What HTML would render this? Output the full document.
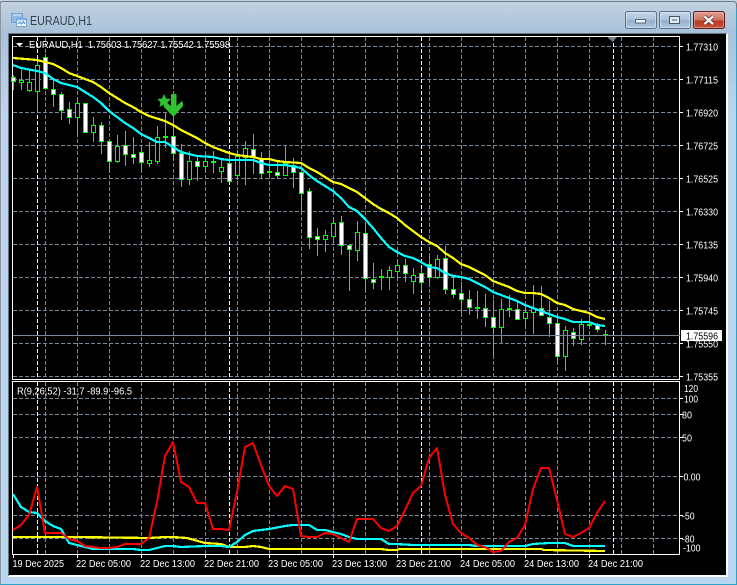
<!DOCTYPE html>
<html><head><meta charset="utf-8"><style>
html,body{margin:0;padding:0;background:#b9d5ef}
svg{display:block}
text{font-family:"Liberation Sans",sans-serif;font-size:10px;fill:#fff}
</style></head><body>
<svg width="737" height="585" viewBox="0 0 737 585" xmlns="http://www.w3.org/2000/svg">
<defs>
<linearGradient id="g" x1="0" y1="0" x2="0" y2="1"><stop offset="0" stop-color="#c3d2df"/><stop offset=".055" stop-color="#a9c2da"/><stop offset=".2" stop-color="#bdd5ec"/><stop offset="1" stop-color="#b9d5ef"/></linearGradient>
<linearGradient id="b" x1="0" y1="0" x2="0" y2="1"><stop offset="0" stop-color="#c9d8e6"/><stop offset=".5" stop-color="#aac1d8"/><stop offset=".55" stop-color="#94afca"/><stop offset="1" stop-color="#b4cde4"/></linearGradient>
<linearGradient id="c" x1="0" y1="0" x2="0" y2="1"><stop offset="0" stop-color="#dfa093"/><stop offset=".5" stop-color="#cf7460"/><stop offset=".55" stop-color="#b93a22"/><stop offset="1" stop-color="#c8553a"/></linearGradient>
</defs>
<rect width="737" height="585" fill="url(#g)"/>
<path d="M0 585V4Q0 1.5 3 1.5H733Q736 1.5 736.5 4V585" fill="none" stroke="#6f7c87" stroke-width="1"/>
<path d="M.5 4V585" stroke="#8a97a3" fill="none"/>
<rect x="0" y="584" width="737" height="1" fill="#2aa0c8"/>
<rect x="736" y="8" width="1" height="577" fill="#2aa0c8"/>

<!-- title icon -->
<rect x="11.500" y="13.500" width="11" height="9" fill="#8fbce6" stroke="#6fa3d6"/>
<rect x="16.500" y="18.500" width="10" height="8" fill="#f4f8fc" stroke="#6fa3d6"/>
<rect x="17" y="19" width="9" height="1.500" fill="#8fbce6"/>
<path d="M18 24l2-2 1.500 2 2-2.500 1.500 2.500" fill="none" stroke="#4f86c0"/>
<path d="M13 15h8" stroke="#e2eef9"/>
<text x="30" y="25" textLength="62" lengthAdjust="spacingAndGlyphs" style="font-size:12.500px;fill:#33414f">EURAUD,H1</text>

<!-- buttons -->
<rect x="625.500" y="11.500" width="31" height="17" rx="2" fill="url(#b)" stroke="#5e7389"/>
<rect x="626.500" y="12.500" width="29" height="15" rx="1.500" fill="none" stroke="#dbe6f0" stroke-opacity=".6"/>
<rect x="635.500" y="19.500" width="10" height="3.500" fill="#f2f4f6" stroke="#55677a"/>
<rect x="659.500" y="11.500" width="31" height="17" rx="2" fill="url(#b)" stroke="#5e7389"/>
<rect x="660.500" y="12.500" width="29" height="15" rx="1.500" fill="none" stroke="#dbe6f0" stroke-opacity=".6"/>
<rect x="669.500" y="16.500" width="10" height="7" fill="#e6ebf0" stroke="#44566a"/>
<rect x="672" y="19" width="5" height="2" fill="#8ea3b8"/>
<rect x="693.500" y="11.500" width="31" height="17" rx="2" fill="url(#c)" stroke="#5b1f25"/>
<rect x="694.500" y="12.500" width="29" height="15" rx="1.500" fill="none" stroke="#eec0b4" stroke-opacity=".5"/>
<path d="M704.500 16.500L713 24M713 16.500L704.500 24" stroke="#5a3a38" stroke-width="4"/>
<path d="M704.500 16.500L713 24M713 16.500L704.500 24" stroke="#f6f3f2" stroke-width="2.400"/>

<!-- chart frame -->
<rect x="8" y="33" width="720" height="544" fill="#fff"/>
<rect x="8" y="33" width="719" height="1" fill="#69747e"/>
<rect x="8" y="33" width="1" height="543" fill="#69747e"/>
<rect x="9" y="34" width="717" height="541" fill="#000"/>

<!-- grid -->
<g shape-rendering="crispEdges" fill="none" stroke="#778899" stroke-dasharray="4 2">
<path d="M13 46.500H680M13 79.500H680M13 112.500H680M13 145.500H680M13 178.500H680M13 211.500H680M13 244.500H680M13 277.500H680M13 310.500H680M13 343.500H680M13 376.500H680"/>
<path d="M13 398.500H680M13 414.500H680M13 437.500H680M13 476.500H680M13 515.500H680M13 538.500H680"/>
<path d="M45.500 37V379M77.500 37V379M109.500 37V379M141.500 37V379M173.500 37V379M205.500 37V379M237.500 37V379M269.500 37V379M301.500 37V379M333.500 37V379M365.500 37V379M397.500 37V379M429.500 37V379M461.500 37V379M493.500 37V379M525.500 37V379M557.500 37V379M589.500 37V379M621.500 37V379M653.500 37V379"/>
<path d="M45.500 382V554M77.500 382V554M109.500 382V554M141.500 382V554M173.500 382V554M205.500 382V554M237.500 382V554M269.500 382V554M301.500 382V554M333.500 382V554M365.500 382V554M397.500 382V554M429.500 382V554M461.500 382V554M493.500 382V554M525.500 382V554M557.500 382V554M589.500 382V554M621.500 382V554M653.500 382V554"/>
</g>
<g shape-rendering="crispEdges" fill="none" stroke="#fff" stroke-dasharray="4 2">
<path d="M37.500 37V379M229.500 37V379M421.500 37V379M613.500 37V379M37.500 382V554M229.500 382V554M421.500 382V554M613.500 382V554"/>
</g>

<!-- boxes and ticks -->
<g shape-rendering="crispEdges" fill="none" stroke="#fff">
<rect x="12.500" y="36.500" width="667" height="343"/>
<rect x="12.500" y="381.500" width="667" height="173"/>
<path d="M680 46.500h3M680 79.500h3M680 112.500h3M680 145.500h3M680 178.500h3M680 211.500h3M680 244.500h3M680 277.500h3M680 310.500h3M680 343.500h3M680 376.500h3"/>
<path d="M680 398.500h3M680 414.500h3M680 437.500h3M680 476.500h3M680 515.500h3M680 538.500h3"/>
<path d="M13.500 555v3M77.500 555v3M141.500 555v3M205.500 555v3M269.500 555v3M333.500 555v3M397.500 555v3M461.500 555v3M525.500 555v3M589.500 555v3"/>
</g>

<polygon points="607.500,37 617,37 612.500,42" fill="#778088"/>

<!-- candles -->
<g stroke="#00ff00" stroke-width="1">
<path fill="none" d="M13.500 75V90M21.500 70V90M29.500 70V92M37.500 62V113M45.500 54V90M53.500 80V107M61.500 92V120M69.500 102V124M77.500 98V135M85.500 103V132M93.500 117V142M101.500 122V154M109.500 141V172M117.500 135V163M125.500 131V166M133.500 137V164M141.500 145V171M149.500 142V167M157.500 126V164M165.500 113V148M173.500 117V160M181.500 144V187M189.500 151V185M197.500 155V181M205.500 153V172M213.500 151V173M221.500 158V183M229.500 152V182M237.500 150V180M245.500 141V185M253.500 134V174M261.500 152V178M269.500 150V178M277.500 160V179M285.500 146V175M293.500 158V188M301.500 172V215M309.500 188V249M317.500 228V256M325.500 230V252M333.500 217V243M341.500 216V255M349.500 245V291M357.500 221V261M365.500 222V291M373.500 263V289M381.500 269V290M389.500 266V290M397.500 260V279M405.500 259V282M413.500 268V294M421.500 268V290M429.500 256V283M437.500 255V279M445.500 246V294M453.500 277V298M461.500 282V314M469.500 290V315M477.500 291V319M485.500 294V327M493.500 300V356M501.500 299V343M509.500 295V317M517.500 302V320M525.500 305V327M533.500 285V334M541.500 286V316M549.500 301V337M557.500 315V363M565.500 326V371M573.500 328V346M581.500 319V345M589.500 314V329M597.500 323V332M605.500 330V345"/>
<path fill="#000" d="M19.500 80.500h4v2h-4zM27.500 82.500h4v8h-4zM35.500 65.500h4v26h-4zM75.500 103.500h4v14h-4zM91.500 125.500h4v7h-4zM115.500 146.500h4v15h-4zM147.500 160.500h4v3h-4zM155.500 137.500h4v24h-4zM187.500 161.500h4v18h-4zM203.500 161.500h4v5h-4zM219.500 167.500h4v4h-4zM235.500 156.500h4v19h-4zM243.500 148.500h4v9h-4zM283.500 163.500h4v12h-4zM323.500 235.500h4v4h-4zM331.500 223.500h4v13h-4zM355.500 232.500h4v18h-4zM387.500 270.500h4v7h-4zM395.500 265.500h4v6h-4zM411.500 275.500h4v6h-4zM435.500 259.500h4v18h-4zM499.500 309.500h4v18h-4zM523.500 312.500h4v6h-4zM531.500 308.500h4v4h-4zM563.500 330.500h4v26h-4zM579.500 324.500h4v15h-4z"/>
<path fill="#00ff00" d="M163.500 136.500h4v1h-4zM211.500 161.500h4v1h-4zM267.500 171.500h4v1h-4zM379.500 276.500h4v1h-4zM475.500 307.500h4v1h-4zM507.500 308.500h4v1h-4zM587.500 324.500h4v1h-4zM603.500 334.500h4v1h-4z"/>
<path fill="#fff" d="M11.500 77.500h4v4h-4zM43.500 57.500h4v31h-4zM51.500 89.500h4v5h-4zM59.500 94.500h4v16h-4zM67.500 109.500h4v8h-4zM83.500 103.500h4v29h-4zM99.500 125.500h4v16h-4zM107.500 141.500h4v20h-4zM123.500 145.500h4v9h-4zM131.500 154.500h4v3h-4zM139.500 152.500h4v10h-4zM171.500 136.500h4v17h-4zM179.500 153.500h4v26h-4zM195.500 161.500h4v5h-4zM227.500 163.500h4v18h-4zM251.500 149.500h4v8h-4zM259.500 158.500h4v15h-4zM275.500 172.500h4v3h-4zM291.500 165.500h4v7h-4zM299.500 172.500h4v21h-4zM307.500 191.500h4v46h-4zM315.500 236.500h4v3h-4zM339.500 222.500h4v23h-4zM347.500 245.500h4v4h-4zM363.500 233.500h4v45h-4zM371.500 279.500h4v3h-4zM403.500 265.500h4v8h-4zM419.500 273.500h4v9h-4zM427.500 264.500h4v13h-4zM443.500 258.500h4v31h-4zM451.500 289.500h4v5h-4zM459.500 293.500h4v6h-4zM467.500 299.500h4v8h-4zM483.500 308.500h4v9h-4zM491.500 317.500h4v10h-4zM515.500 309.500h4v10h-4zM539.500 308.500h4v7h-4zM547.500 317.500h4v6h-4zM555.500 323.500h4v33h-4zM571.500 332.500h4v6h-4zM595.500 324.500h4v5h-4z"/>
</g>

<!-- price line -->
<path d="M13 335.500H680" stroke="#778899" shape-rendering="crispEdges"/>

<!-- MAs -->
<g fill="none" stroke-width="2.200" stroke-linejoin="round" shape-rendering="crispEdges">
<polyline stroke="#ffff00" points="13,58 37,60 45,62 53,64 61,68 69,73 77,76 93,82 101,87 109,93 117,98 125,103 133,107 141,112 149,116 165,121 173,125 181,130 189,134 197,138 205,143 213,147 221,150 229,153 237,155 253,157 261,159 269,159 277,161 285,162 301,163 309,168 317,172 325,177 333,182 341,184 349,188 357,192 365,198 373,204 381,209 389,213 397,218 405,225 413,231 421,237 429,242 437,246 445,253 453,258 461,264 469,267 477,271 485,275 493,281 501,284 509,287 517,291 525,293 533,293 541,294 549,298 557,303 565,305 573,309 581,311 589,313 597,317 605,319"/>
<polyline stroke="#00ffff" points="13,65 21,68 37,71 45,73 53,79 61,83 77,87 93,97 101,103 109,111 117,117 125,123 133,128 141,134 149,138 157,142 165,142 173,147 181,152 189,154 197,156 213,157 221,159 229,160 253,160 261,163 269,165 285,165 301,168 309,175 317,181 325,186 333,191 341,198 349,207 357,211 365,219 373,228 381,238 389,247 397,252 405,256 413,258 421,262 429,267 437,268 445,273 453,276 461,277 469,279 477,283 485,287 493,292 501,295 509,298 517,301 525,305 533,308 541,311 549,314 557,317 565,319 573,322 589,322 597,325 605,326"/>
</g>

<!-- arrow & star -->
<polygon fill="#2fc22f" points="164,94 166,98.500 171,99 167.500,102.500 168.500,107 164,104.500 159.500,107 160.500,102.500 157.500,99 162,98.500"/>
<polygon fill="#2fc22f" points="171,94 176.500,94 176.500,106 182,101 183,103 183,106 173.500,117 164,107 164,104 166,102 171,106"/>

<!-- sub indicator -->
<g fill="none" stroke-width="2" stroke-linejoin="round">
<polyline stroke="#ffff00" stroke-width="2.200" shape-rendering="crispEdges" points="13,537 37,537 77,537 149,538 165,537 173,537 187,538 205,543 221,544 229,547 245,547 253,546 261,547 269,549 381,549 389,550 397,550 399,549 541,549 544,550 605,551"/>
<polyline stroke="#00ffff" stroke-width="2.200" shape-rendering="crispEdges" points="13,494 21,507 29,512 37,513 45,521 53,526 61,529 69,543 77,545 85,547 93,549 133,549 141,550 149,550 157,548 165,546 173,546 181,547 205,546 221,546 229,547 237,542 245,535 253,531 269,529 285,526 293,525 309,525 317,530 325,530 341,534 349,537 357,539 381,539 389,544 397,544 413,545 429,545 469,545 477,546 525,546 533,544 549,543 565,543 573,546 605,546"/>
<polyline stroke="#ff0000" stroke-width="2" points="13,530 21,525 29,515 37,487 45,533 53,533 61,533 69,539 77,541 85,546 93,547 101,548 109,548 117,547 125,544 133,544 141,544 149,538 157,502 165,456 173,442 181,482 189,487 197,503 205,503 213,529 221,529 229,530 237,492 245,447 253,443 261,465 269,486 277,496 285,486 293,489 301,536 309,537 317,537 325,533 333,534 341,538 349,542 357,519 365,519 373,519 381,528 389,531 397,526 405,510 413,493 421,486 429,458 437,448 445,495 453,524 461,533 469,538 477,545 485,547 493,552 501,551 509,542 517,538 525,525 533,489 541,468 549,468 557,500 565,534 573,537 581,533 589,528 597,513 605,501"/>
</g>

<!-- chart text -->
<polygon points="16,43 23,43 19.500,46.500" fill="#fff"/>
<text x="29" y="48" textLength="201" lengthAdjust="spacingAndGlyphs">EURAUD,H1&#160;&#160;1.75603 1.75627 1.75542 1.75598</text>
<text x="17" y="394.500" textLength="115" lengthAdjust="spacingAndGlyphs">R(9,26,52) -31.7 -89.9 -96.5</text>

<g>
<text x="686" y="50.500" textLength="32" lengthAdjust="spacingAndGlyphs">1.77310</text>
<text x="686" y="83.500" textLength="32" lengthAdjust="spacingAndGlyphs">1.77115</text>
<text x="686" y="116.500" textLength="32" lengthAdjust="spacingAndGlyphs">1.76920</text>
<text x="686" y="149.500" textLength="32" lengthAdjust="spacingAndGlyphs">1.76725</text>
<text x="686" y="182.500" textLength="32" lengthAdjust="spacingAndGlyphs">1.76525</text>
<text x="686" y="215.500" textLength="32" lengthAdjust="spacingAndGlyphs">1.76330</text>
<text x="686" y="248.500" textLength="32" lengthAdjust="spacingAndGlyphs">1.76135</text>
<text x="686" y="281.500" textLength="32" lengthAdjust="spacingAndGlyphs">1.75940</text>
<text x="686" y="314.500" textLength="32" lengthAdjust="spacingAndGlyphs">1.75745</text>
<text x="686" y="347.500" textLength="32" lengthAdjust="spacingAndGlyphs">1.75550</text>
<text x="686" y="380.500" textLength="32" lengthAdjust="spacingAndGlyphs">1.75355</text>
</g>
<rect x="681" y="330" width="41" height="11" fill="#fff"/>
<text x="686" y="339.500" textLength="32" lengthAdjust="spacingAndGlyphs" style="fill:#000">1.75596</text>

<text x="684" y="392" textLength="14" lengthAdjust="spacingAndGlyphs">120</text>
<text x="684" y="402.500" textLength="14" lengthAdjust="spacingAndGlyphs">100</text>
<text x="682" y="418.500" textLength="10" lengthAdjust="spacingAndGlyphs">80</text>
<text x="682" y="441.500" textLength="10" lengthAdjust="spacingAndGlyphs">50</text>
<text x="683.500" y="480.500" textLength="17" lengthAdjust="spacingAndGlyphs">0.00</text>
<text x="682" y="519.500" textLength="12.500" lengthAdjust="spacingAndGlyphs">-50</text>
<text x="682" y="542.500" textLength="12.500" lengthAdjust="spacingAndGlyphs">-80</text>
<text x="683" y="551.500" textLength="17.500" lengthAdjust="spacingAndGlyphs">-100</text>

<g>
<text x="12.500" y="567" textLength="51.500" lengthAdjust="spacingAndGlyphs">19 Dec 2025</text>
<text x="76" y="567" textLength="55" lengthAdjust="spacingAndGlyphs">22 Dec 05:00</text>
<text x="140" y="567" textLength="55" lengthAdjust="spacingAndGlyphs">22 Dec 13:00</text>
<text x="204" y="567" textLength="55" lengthAdjust="spacingAndGlyphs">22 Dec 21:00</text>
<text x="268" y="567" textLength="55" lengthAdjust="spacingAndGlyphs">23 Dec 05:00</text>
<text x="332" y="567" textLength="55" lengthAdjust="spacingAndGlyphs">23 Dec 13:00</text>
<text x="396" y="567" textLength="55" lengthAdjust="spacingAndGlyphs">23 Dec 21:00</text>
<text x="460" y="567" textLength="55" lengthAdjust="spacingAndGlyphs">24 Dec 05:00</text>
<text x="524" y="567" textLength="55" lengthAdjust="spacingAndGlyphs">24 Dec 13:00</text>
<text x="588" y="567" textLength="55" lengthAdjust="spacingAndGlyphs">24 Dec 21:00</text>
</g>
</svg>
</body></html>
